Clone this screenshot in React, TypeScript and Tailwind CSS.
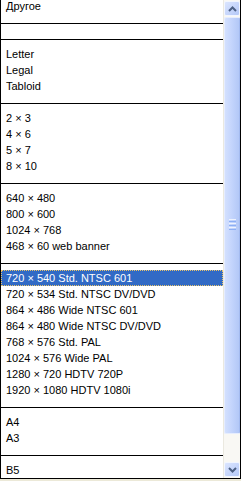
import type { ReactNode } from 'react';

type Item = { label?: string; sep?: boolean; selected?: boolean };

const items: Item[] = [
  { label: 'Другое' },
  { sep: true },
  { sep: true },
  { label: 'Letter' },
  { label: 'Legal' },
  { label: 'Tabloid' },
  { sep: true },
  { label: '2 × 3' },
  { label: '4 × 6' },
  { label: '5 × 7' },
  { label: '8 × 10' },
  { sep: true },
  { label: '640 × 480' },
  { label: '800 × 600' },
  { label: '1024 × 768' },
  { label: '468 × 60 web banner' },
  { sep: true },
  { label: '720 × 540 Std. NTSC 601', selected: true },
  { label: '720 × 534 Std. NTSC DV/DVD' },
  { label: '864 × 486 Wide NTSC 601' },
  { label: '864 × 480 Wide NTSC DV/DVD' },
  { label: '768 × 576 Std. PAL' },
  { label: '1024 × 576 Wide PAL' },
  { label: '1280 × 720 HDTV 720P' },
  { label: '1920 × 1080 HDTV 1080i' },
  { sep: true },
  { label: 'A4' },
  { label: 'A3' },
  { sep: true },
  { label: 'B5' },
];

function Row({ item }: { item: Item }) {
  if (item.sep) {
    return (
      <div className="h-[16px] flex flex-col">
        <div className="h-[9px]" />
        <div className="h-[1px] bg-black" />
      </div>
    );
  }
  if (item.selected) {
    return (
      <div className="h-[16px] bg-[#316ac5] text-white leading-[14px] pl-[4px] whitespace-nowrap border border-dotted border-[#e9c46a]">
        {item.label}
      </div>
    );
  }
  return <div className="h-[16px] leading-[16px] pl-[5px] whitespace-nowrap">{item.label}</div>;
}

function ScrollButton({ children }: { children: ReactNode }) {
  return (
    <div className="h-[15px] w-[16px] rounded-[2px] border border-[#f2f6ff] bg-gradient-to-br from-[#dbe5fe] to-[#b5c9f8] flex items-center justify-center">
      {children}
    </div>
  );
}

function Chevron({ up }: { up?: boolean }) {
  return (
    <svg width="9" height="6" viewBox="0 0 9 6">
      <path
        d={up ? 'M1 5 L4.5 1.5 L8 5' : 'M1 1 L4.5 4.5 L8 1'}
        fill="none"
        stroke="#4d6185"
        strokeWidth="2"
      />
    </svg>
  );
}

function Scrollbar() {
  return (
    <div className="w-[17px] h-full flex flex-col bg-[#f9f8f4] border-l border-[#ebe9e0]">
      <div className="h-[1px]" />
      <ScrollButton>
        <Chevron up />
      </ScrollButton>
      <div className="h-[1px]" />
      <div className="h-[417px] w-[16px] rounded-[2px] border border-[#e6edfe] border-r-[#a4bbf0] bg-gradient-to-r from-[#d3e0fe] via-[#c3d4fc] to-[#b3c8f7] flex items-center justify-center">
        <div className="flex flex-col gap-[1px] mt-[-2px]">
          <div className="w-[7px] h-[1px] bg-[#eef3fe]" />
          <div className="w-[7px] h-[1px] bg-[#8daff4]" />
          <div className="w-[7px] h-[1px] bg-[#eef3fe]" />
          <div className="w-[7px] h-[1px] bg-[#8daff4]" />
          <div className="w-[7px] h-[1px] bg-[#eef3fe]" />
          <div className="w-[7px] h-[1px] bg-[#8daff4]" />
        </div>
      </div>
      <div className="flex-1" />
      <ScrollButton>
        <Chevron />
      </ScrollButton>
      <div className="h-[1px]" />
    </div>
  );
}

export default function App() {
  return (
    <div
      className="w-[241px] h-[481px] bg-white flex flex-col text-[11px] text-black"
      style={{ fontFamily: "'Liberation Sans', Arial, sans-serif" }}
    >
      <div className="h-[478px] flex border-l border-r border-black">
        <div className="flex-1 overflow-hidden">
          <div className="-mt-[2px]">
            {items.map((item, i) => (
              <Row key={i} item={item} />
            ))}
          </div>
        </div>
        <Scrollbar />
      </div>
      <div className="h-[1px] bg-black" />
      <div className="h-[2px] bg-[#ece9d8]" />
    </div>
  );
}
